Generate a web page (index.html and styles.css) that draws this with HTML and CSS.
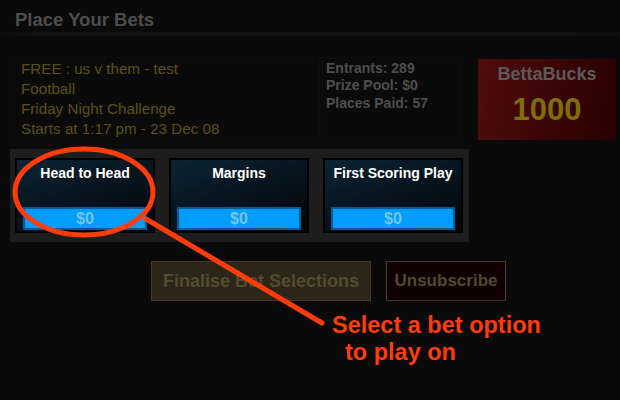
FILE: index.html
```html
<!DOCTYPE html>
<html>
<head>
<meta charset="utf-8">
<link rel="stylesheet" href="styles.css">
</head>
<body>
<div class="page">
  <div class="header"><h1 class="title">Place Your Bets</h1></div>
  <div class="sep"></div>
  <div class="info-row">
    <div class="event">
      <div>FREE : us v them - test</div>
      <div>Football</div>
      <div>Friday Night Challenge</div>
      <div>Starts at 1:17 pm - 23 Dec 08</div>
    </div>
    <div class="stats">
      <div>Entrants: 289</div>
      <div>Prize Pool: $0</div>
      <div>Places Paid: 57</div>
    </div>
    <div class="bucks">
      <div class="bucks-label">BettaBucks</div>
      <div class="bucks-value">1000</div>
    </div>
  </div>
  <div class="options">
    <div class="card"><div class="card-title">Head to Head</div><div class="bar">$0</div></div>
    <div class="card"><div class="card-title">Margins</div><div class="bar">$0</div></div>
    <div class="card"><div class="card-title">First Scoring Play</div><div class="bar">$0</div></div>
  </div>
  <div class="actions">
    <button class="btn btn-final">Finalise Bet Selections</button>
    <button class="btn btn-unsub">Unsubscribe</button>
  </div>

  <svg class="annot" width="620" height="400" viewBox="0 0 620 400">
    <line x1="146" y1="219" x2="322" y2="323" stroke="#ff3c0a" stroke-width="5" stroke-linecap="round"/>
    <ellipse cx="84" cy="192" rx="69" ry="43" fill="none" stroke="#ff3c0a" stroke-width="5"/>
  </svg>
  <div class="note">Select a bet option<span class="note-2">to play on</span></div>
</div>
</body>
</html>
```
FILE: styles.css
```css
html, body {
  margin: 0;
  padding: 0;
  background: #0a0a0a;
}
.page {
  position: relative;
  width: 620px;
  height: 400px;
  overflow: hidden;
  font-family: "Liberation Sans", Arial, sans-serif;
  background: #0a0a0a;
}
.header {
  height: 32px;
  padding-left: 15px;
}
.title {
  margin: 0;
  padding-top: 10px;
  font-size: 18.5px;
  line-height: 20px;
  font-weight: bold;
  color: #4d4d4d;
}
.sep {
  height: 4px;
  background: linear-gradient(to right, #0c0c0c, #141414 8%, #131313 85%, #0f0f0f);
}
.info-row {
  display: flex;
  align-items: flex-start;
  margin-top: 21px;
  padding-left: 10px;
}
.event {
  width: 298px;
  height: 80px;
  padding: 1px 0 0 10px;
  border: 1px solid #0e0e0e;
  font-size: 15.2px;
  line-height: 20px;
  color: #5a5212;
}
.stats {
  width: 133px;
  height: 77px;
  margin-left: 2px;
  padding: 2px 0 0 3px;
  border: 1px solid #0e0e0e;
  font-size: 14px;
  line-height: 17.3px;
  font-weight: bold;
  color: #4e4e4e;
}
.bucks {
  width: 138px;
  height: 81px;
  margin-left: 18px;
  margin-top: 2px;
  background: linear-gradient(100deg, #500c0c 0%, #3a0505 55%, #280101 100%);
  text-align: center;
  font-weight: bold;
}
.bucks-label {
  padding-top: 5px;
  font-size: 18px;
  line-height: 20px;
  color: #5e5a5a;
}
.bucks-value {
  margin-top: 9px;
  font-size: 31px;
  line-height: 33px;
  color: #7d6d0c;
}
.options {
  display: flex;
  gap: 14px;
  width: 448px;
  margin: 9px 0 0 10px;
  padding: 9px 6px 9px 5px;
  background: #1d1d1d;
}
.card {
  box-sizing: border-box;
  width: 140px;
  height: 75px;
  border: 2px solid #000;
  padding: 5px 6px 1px;
  display: flex;
  flex-direction: column;
  background: linear-gradient(160deg, #0d2433 0%, #061520 45%, #020609 100%);
}
.card-title {
  font-size: 14px;
  line-height: 16px;
  font-weight: bold;
  color: #ffffff;
  text-align: center;
}
.bar {
  margin-top: auto;
  box-sizing: border-box;
  height: 23px;
  border: 2px solid #075a94;
  background: #009dff;
  color: #76c6f2;
  font-size: 16px;
  line-height: 19px;
  font-weight: bold;
  text-align: center;
}
.actions {
  display: flex;
  gap: 15px;
  margin-top: 19px;
  padding-left: 151px;
}
.btn {
  box-sizing: border-box;
  height: 40px;
  padding: 0;
  font-family: "Liberation Sans", Arial, sans-serif;
  font-weight: bold;
  color: #554931;
  border: 1px solid #463a26;
  cursor: pointer;
}
.btn-final {
  width: 220px;
  font-size: 18px;
  background: #2c2518;
}
.btn-unsub {
  width: 120px;
  font-size: 17px;
  background: #0f0101;
}
.annot {
  position: absolute;
  left: 0;
  top: 0;
  pointer-events: none;
}
.note {
  position: absolute;
  left: 332px;
  top: 312px;
  font-size: 23.5px;
  line-height: 27px;
  font-weight: bold;
  color: #ff3c0a;
}
.note-2 {
  display: block;
  padding-left: 13px;
}
```
